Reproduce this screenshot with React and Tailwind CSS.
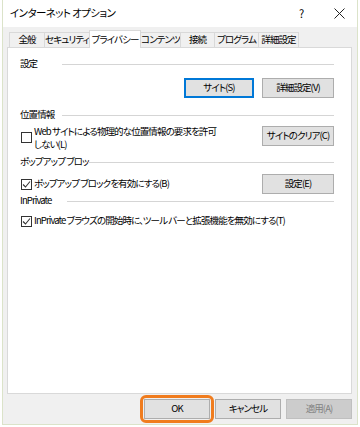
import { useState } from 'react'

const tabs = [
  { label: '全般', w: 'w-[36px]' },
  { label: 'セキュリティ', w: 'w-[46px]' },
  { label: 'プライバシー', w: 'w-[52px]', active: true },
  { label: 'コンテンツ', w: 'w-[41px]' },
  { label: '接続', w: 'w-[35px]' },
  { label: 'プログラム', w: 'w-[45px]' },
  { label: '詳細設定', w: 'w-[41px]' },
]

function Check({ checked }) {
  return (
    <span className="w-[11px] h-[11px] border border-[#333] bg-white flex items-center justify-center flex-shrink-0">
      {checked && (
        <svg width="9" height="9" viewBox="0 0 9 9">
          <path d="M1 4.5 L3.5 7 L8 1.5" fill="none" stroke="#333" strokeWidth="1.1" />
        </svg>
      )}
    </span>
  )
}

function Btn({ children, w = 'w-[72px]', primary, disabled }) {
  return (
    <button className={`${w} h-[20px] flex items-center justify-center whitespace-nowrap ${primary ? 'border-2 border-[#0078d7]' : 'border border-[#adadad]'} ${disabled ? 'bg-[#cccccc] border-[#bfbfbf] text-[#838383]' : 'bg-[#e1e1e1] text-black'}`}>
      {children}
    </button>
  )
}

function Group({ label, w }) {
  return (
    <div className="flex items-center h-[14px] pl-[12px] pr-[17px]">
      <span className={`${w} whitespace-nowrap flex-shrink-0`}>{label}</span>
      <span className="flex-1 h-px bg-[#d5d5d5]" />
    </div>
  )
}

export default function App() {
  const [tab] = useState('プライバシー')

  return (
    <div className="w-[360px] h-[427px] bg-white text-black text-[9.5px] tracking-[-0.9px] [font-feature-settings:'palt'] font-['Noto_Sans_CJK_JP','Noto_Sans',sans-serif] leading-none">
      <div className="ml-[2px] w-[356px] h-[425px] border border-t-0 border-[#dbe3c9] bg-[#f0f0f0] flex flex-col">
        {/* title bar */}
        <div className="h-[27px] bg-white flex items-center pl-[7px] pr-[12px]">
          <span className="flex-1 text-[10.5px] tracking-[-0.6px]">インターネット オプション</span>
          <span className="w-[10px] text-[11px] mr-[25px]">?</span>
          <svg width="11" height="11" viewBox="0 0 11 11">
            <path d="M0.5 0.5 L10.5 10.5 M10.5 0.5 L0.5 10.5" stroke="#222" strokeWidth="1" />
          </svg>
        </div>

        {/* tabs */}
        <div className="mt-[3px] pl-[6px] flex items-end h-[17px] relative z-10">
          {tabs.map(t => (
            <div key={t.label}
              className={`${t.w} -ml-px first:ml-0 flex items-center justify-center border border-b-0 border-[#d9d9d9] whitespace-nowrap ${t.label === tab ? 'h-[18px] -mb-px bg-white' : 'h-[15px] bg-[#f0f0f0]'}`}>
              {t.label}
            </div>
          ))}
        </div>

        {/* panel */}
        <div className="ml-[4px] w-[345px] h-[347px] bg-white border border-[#d9d9d9] flex flex-col">
          <div className="mt-[9px]"><Group label="設定" w="w-[42px]" /></div>
          <div className="mt-[7px] flex justify-end gap-[8px] pr-[17px]">
            <Btn w="w-[70px]" primary>サイト(S)</Btn>
            <Btn>詳細設定(V)</Btn>
          </div>

          <div className="mt-[10px]"><Group label="位置情報" w="w-[42px]" /></div>
          <div className="mt-[3px] flex items-start pl-[13px] pr-[17px]">
            <div className="mt-[7px]"><Check /></div>
            <div className="ml-[2px] flex-1 leading-[13px]">
              <div>Web サイトによる物理的な位置情報の要求を許可</div>
              <div>しない(L)</div>
            </div>
            <div className="mt-[1px]"><Btn>サイトのクリア(C)</Btn></div>
          </div>

          <div className="mt-[4px]"><Group label="ポップアップ ブロッ" w="w-[68px]" /></div>
          <div className="mt-[5px] flex items-center pl-[13px] pr-[17px]">
            <Check checked />
            <span className="ml-[2px] flex-1">ポップアップ ブロックを有効にする(B)</span>
            <Btn>設定(E)</Btn>
          </div>

          <div className="mt-[0px]"><Group label="InPrivate" w="w-[47px]" /></div>
          <div className="mt-[6px] flex items-center h-[14px] pl-[13px] pr-[17px]">
            <Check checked />
            <span className="ml-[2px]">InPrivate ブラウズの開始時に、ツール バーと拡張機能を無効にする(T)</span>
          </div>
        </div>

        {/* footer buttons */}
        <div className="mt-[5px] flex justify-end gap-[5px] pr-[5px]">
          <div className="-m-[4px] p-[1px] border-[3px] border-[#f07c1e] rounded-[6px] flex">
            <Btn w="w-[66px]">OK</Btn>
          </div>
          <Btn w="w-[66px]">キャンセル</Btn>
          <Btn w="w-[66px]" disabled>適用(A)</Btn>
        </div>
      </div>
    </div>
  )
}
